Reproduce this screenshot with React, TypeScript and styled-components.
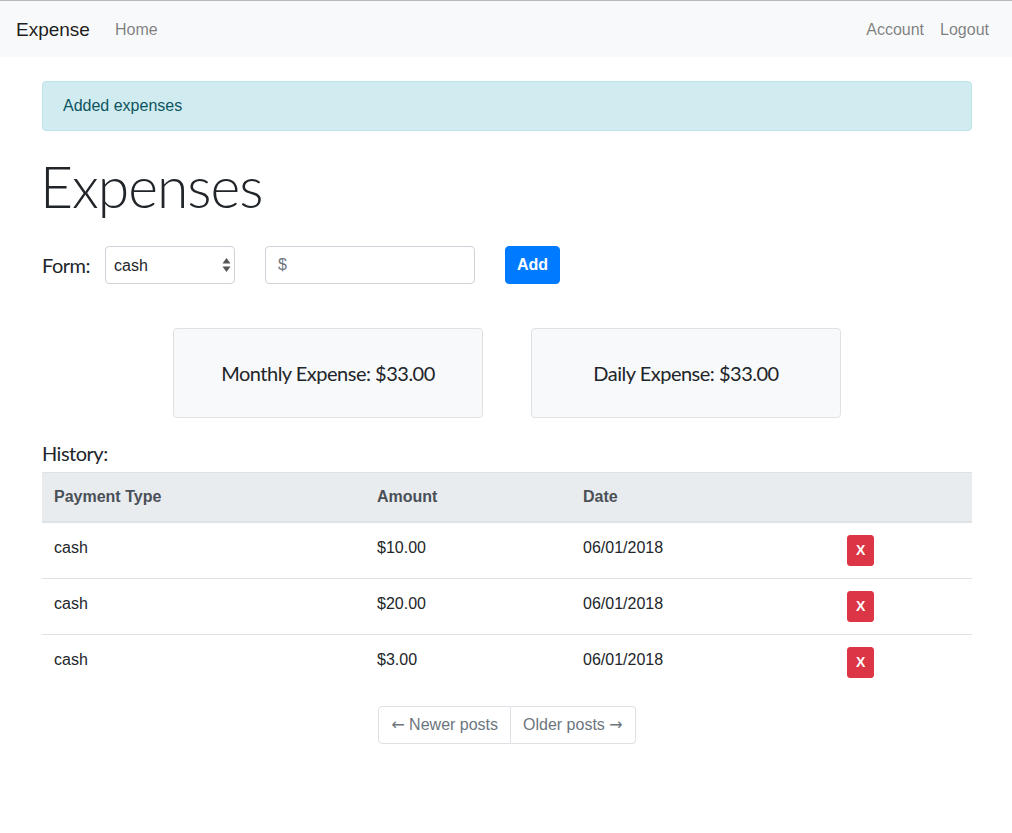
import React, { useState } from "react";
import styled, { createGlobalStyle } from "styled-components";

const GlobalStyle = createGlobalStyle`
  * { box-sizing: border-box; }
  body {
    margin: 0;
    font-family: "Liberation Sans", Arial, sans-serif;
    font-size: 16px;
    line-height: 1.5;
    color: #212529;
    background: #fff;
    border-top: 1px solid #b8b8b8;
  }
`;

type Expense = { id: number; type: string; amount: string; date: string };

const initialExpenses: Expense[] = [
  { id: 1, type: "cash", amount: "$10.00", date: "06/01/2018" },
  { id: 2, type: "cash", amount: "$20.00", date: "06/01/2018" },
  { id: 3, type: "cash", amount: "$3.00", date: "06/01/2018" },
];

function App() {
  const [expenses, setExpenses] = useState(initialExpenses);
  const [payType, setPayType] = useState("cash");
  const [amount, setAmount] = useState("");

  const removeOnClick = (id: number) => {
    setExpenses(expenses.filter((e) => e.id !== id));
  };

  return (
    <>
      <GlobalStyle />
      <NavBar>
        <Brand>Expense</Brand>
        <NavLink>Home</NavLink>
        <NavRight>
          <NavLink>Account</NavLink>
          <NavLink>Logout</NavLink>
        </NavRight>
      </NavBar>

      <Container>
        <Alert>Added expenses</Alert>
        <Title>Expenses</Title>

        <FormRow>
          <FormLabel>Form:</FormLabel>
          <SelectBox>
            <Select value={payType} onChange={(e) => setPayType(e.target.value)}>
              <option value="cash">cash</option>
              <option value="card">card</option>
            </Select>
            <SelectArrows width="9" height="16" viewBox="0 0 9 16">
              <path d="M4.5 1 L8.5 6.5 H0.5 Z" fill="#555" />
              <path d="M4.5 15 L8.5 9.5 H0.5 Z" fill="#555" />
            </SelectArrows>
          </SelectBox>
          <AmountInput
            placeholder="$"
            value={amount}
            onChange={(e) => setAmount(e.target.value)}
          />
          <PrimaryButton>Add</PrimaryButton>
        </FormRow>

        <Cards>
          <SummaryCard>
            <Lead>Monthly Expense: $33.00</Lead>
          </SummaryCard>
          <SummaryCard>
            <Lead>Daily Expense: $33.00</Lead>
          </SummaryCard>
        </Cards>

        <HistoryLabel>History:</HistoryLabel>
        <Table>
          <thead>
            <tr>
              <Th style={{ width: 323 }}>Payment Type</Th>
              <Th style={{ width: 206 }}>Amount</Th>
              <Th style={{ width: 264 }}>Date</Th>
              <Th />
            </tr>
          </thead>
          <tbody>
            {expenses.map((e) => (
              <tr key={e.id}>
                <Td>{e.type}</Td>
                <Td>{e.amount}</Td>
                <Td>{e.date}</Td>
                <Td>
                  <DangerButton onClick={() => removeOnClick(e.id)}>X</DangerButton>
                </Td>
              </tr>
            ))}
          </tbody>
        </Table>

        <Pager>
          <PageButton first>
            <Arrow>←</Arrow> Newer posts
          </PageButton>
          <PageButton>
            Older posts <Arrow>→</Arrow>
          </PageButton>
        </Pager>
      </Container>
    </>
  );
}

export default App;

const NavBar = styled.nav`
  display: flex;
  align-items: center;
  height: 56px;
  padding: 9px 16px 7px;
  background-color: #f8f9fa;
`;
const Brand = styled.a`
  font-size: 19px;
  line-height: 30px;
  margin-right: 17px;
  color: rgba(0, 0, 0, 0.9);
  cursor: pointer;
`;
const NavLink = styled.a`
  padding: 0 8px;
  color: rgba(0, 0, 0, 0.5);
  cursor: pointer;
`;
const NavRight = styled.div`
  display: flex;
  margin-left: auto;
  margin-right: -1px;
`;
const Container = styled.div`
  width: 960px;
  margin: 0 auto;
  padding: 0 14px 0 16px;
`;
const Alert = styled.div`
  margin-top: 24px;
  padding: 12px 20px;
  border: 1px solid #bee5eb;
  border-radius: 4px;
  background-color: #d1ecf1;
  color: #0c5460;
`;
const Title = styled.h1`
  margin: 21px 0 26px -2px;
  font-family: Lato, "Liberation Sans", sans-serif;
  font-size: 57px;
  font-weight: 300;
  line-height: 1.2;
  letter-spacing: -1px;
  color: #212529;
`;
const Lead = styled.span`
  font-family: Lato, "Liberation Sans", sans-serif;
  font-size: 20px;
  font-weight: 400;
  letter-spacing: -0.5px;
  color: #212529;
`;
const FormRow = styled.div`
  display: flex;
  align-items: center;
  height: 38px;
`;
const FormLabel = styled(Lead)`
  width: 47px;
  margin-right: 16px;
  white-space: nowrap;
`;
const SelectBox = styled.div`
  position: relative;
  width: 130px;
  margin-right: 30px;
`;
const Select = styled.select`
  appearance: none;
  display: block;
  width: 100%;
  height: 38px;
  padding: 0 24px 0 8px;
  border: 1px solid #ced4da;
  border-radius: 4px;
  background: #fff;
  font-family: "Liberation Sans", Arial, sans-serif;
  font-size: 16px;
  color: #212529;
`;
const SelectArrows = styled.svg`
  position: absolute;
  right: 4px;
  top: 11px;
  pointer-events: none;
`;
const AmountInput = styled.input`
  width: 210px;
  height: 38px;
  padding: 6px 12px;
  margin-right: 30px;
  border: 1px solid #ced4da;
  border-radius: 4px;
  font-family: "Liberation Sans", Arial, sans-serif;
  font-size: 16px;
  color: #495057;
  &::placeholder {
    color: #6c757d;
  }
`;
const PrimaryButton = styled.button`
  height: 38px;
  padding: 6px 11px;
  border: 1px solid #007bff;
  border-radius: 4px;
  background-color: #007bff;
  color: #fff;
  font-family: "Liberation Sans", Arial, sans-serif;
  font-size: 16px;
  font-weight: bold;
  cursor: pointer;
`;
const Cards = styled.div`
  display: flex;
  justify-content: center;
  gap: 48px;
  margin-top: 44px;
`;
const SummaryCard = styled.div`
  display: flex;
  align-items: center;
  justify-content: center;
  width: 310px;
  height: 90px;
  border: 1px solid #dfe1e5;
  border-radius: 4px;
  background-color: #f8f9fa;
`;
const HistoryLabel = styled(Lead)`
  display: block;
  margin-top: 20px;
  line-height: 30px;
`;
const Table = styled.table`
  width: 100%;
  border-collapse: collapse;
  margin-top: 4px;
`;
const Th = styled.th`
  padding: 12px;
  text-align: left;
  vertical-align: bottom;
  background-color: #e9ecef;
  color: #495057;
  border-top: 1px solid #dee2e6;
  border-bottom: 2px solid #dee2e6;
`;
const Td = styled.td`
  padding: 13px 12px 12px;
  vertical-align: top;
  border-top: 1px solid #dee2e6;
`;
const DangerButton = styled.button`
  display: block;
  margin-top: -1px;
  padding: 4px 8px;
  border: 1px solid #dc3545;
  border-radius: 3px;
  background-color: #dc3545;
  color: #fff;
  font-family: "Liberation Sans", Arial, sans-serif;
  font-size: 14px;
  font-weight: bold;
  line-height: 21px;
  cursor: pointer;
`;
const Pager = styled.div`
  display: flex;
  justify-content: center;
  margin-top: 16px;
`;
const PageButton = styled.a<{ first?: boolean }>`
  padding: 6px 12px;
  border: 1px solid #dee2e6;
  border-left-width: ${(p) => (p.first ? "1px" : "0")};
  border-radius: ${(p) => (p.first ? "4px 0 0 4px" : "0 4px 4px 0")};
  color: #6c757d;
  background-color: #fff;
  cursor: pointer;
`;
const Arrow = styled.span`
  font-family: "DejaVu Sans", sans-serif;
  font-size: 16px;
`;
